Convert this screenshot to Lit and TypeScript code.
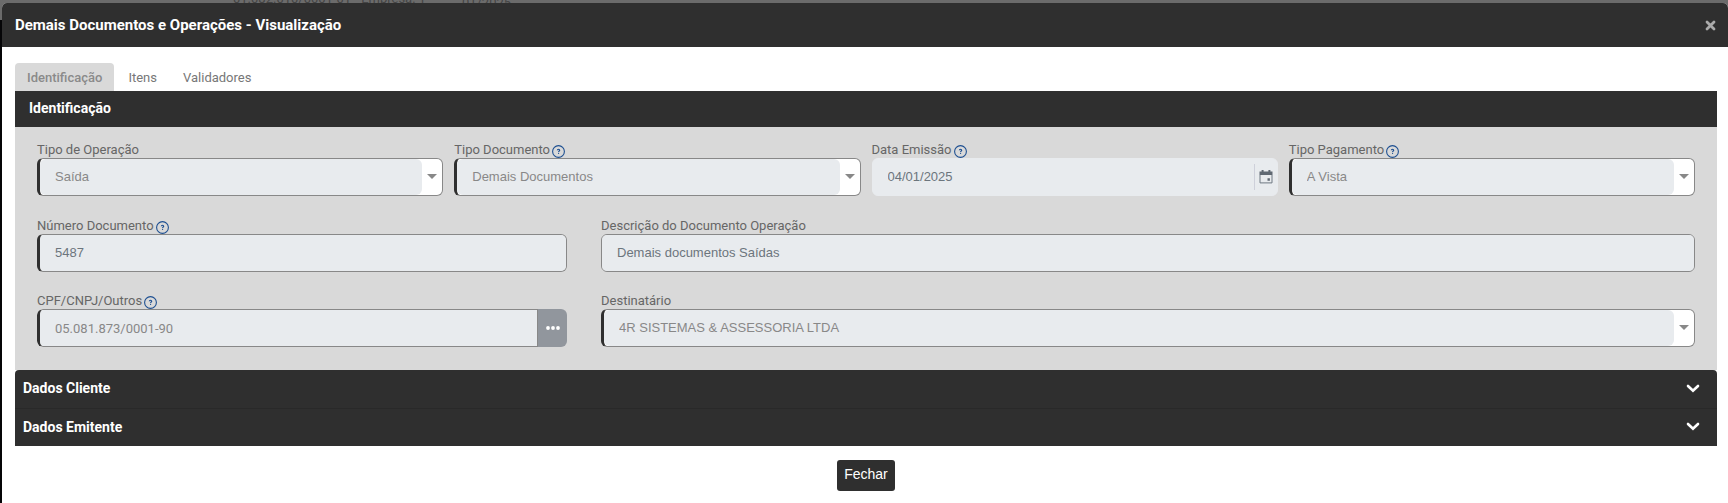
import { LitElement, html, css, svg, nothing } from "lit";
import { customElement, property, state } from "lit/decorators.js";

const helpIcon = html`<svg class="help" viewBox="0 0 13 13" aria-hidden="true">
  <circle cx="6.5" cy="6.5" r="5.9" fill="none" stroke="#1d4f91" stroke-width="1.1" />
  <path d="M5.3 5.2C5.3 4.5 5.8 4.2 6.5 4.2s1.2.4 1.2 1c0 .8-1.1.8-1.1 1.7" fill="none" stroke="#1d4f91" stroke-width="1.1" />
  <rect x="6" y="7.8" width="1.1" height="1.1" fill="#1d4f91" />
</svg>`;

@customElement("form-field")
class FormField extends LitElement {
  @property() label = "";
  @property() value = "";
  @property() kind: "text" | "select" | "date" | "lookup" = "text";
  @property({ type: Boolean }) help = false;
  @property({ type: Boolean }) required = false;

  static styles = css`
    :host {
      display: block;
      min-width: 0;
      font-family: Roboto, sans-serif;
      font-size: 13px;
    }
    .label {
      display: flex;
      align-items: flex-start;
      gap: 2px;
      height: 18px;
      line-height: 20px;
      color: #666;
      white-space: nowrap;
    }
    .label .help {
      width: 13px;
      height: 13px;
      padding-top: 5px;
    }
    .box {
      display: flex;
      box-sizing: border-box;
      height: 38px;
      border: 1px solid #888;
      border-radius: 6px;
      background: #e8ebee;
      overflow: hidden;
    }
    .required {
      border-left: 3px solid #2f2f2f;
    }
    .select {
      background: #fff;
    }
    .date {
      border-color: #e8ebee;
    }
    .control {
      flex: 1;
      min-width: 0;
      margin: 0;
      padding: 0 15px 2px;
      border: 0;
      outline: 0;
      appearance: none;
      background: #e8ebee;
      color: #6c757d;
      font: 13px "Liberation Sans", Arial, sans-serif;
      opacity: 1;
    }
    select.control {
      border-radius: 6px;
      color: #888;
    }
    .lookup .control {
      padding-bottom: 0;
      font-family: Roboto, sans-serif;
      color: #888;
    }
    .arrow {
      width: 10px;
      height: 5px;
      margin: 15px 5px;
    }
    .side {
      display: grid;
      place-items: center;
      padding: 0;
      border: 0;
      background: none;
    }
    .calendar {
      width: 23px;
      height: 26px;
      margin: auto 0;
      border-left: 1px solid #ced0da;
    }
    .more {
      width: 30px;
      background: #91969d;
    }
    .lookup {
      border-right: 0;
      border-top-right-radius: 0;
      border-bottom-right-radius: 0;
      flex: 1;
    }
    .group {
      display: flex;
      border-radius: 6px;
      overflow: hidden;
    }
    .group .more {
      border-left: 1px solid #888;
    }
  `;

  private control() {
    const input = html`<input id="c" class="control" type="text" readonly .value=${this.value} />`;
    const req = this.required ? "required" : "";
    switch (this.kind) {
      case "select":
        return html`<div class="box select ${req}">
          <select id="c" class="control" disabled>
            <option>${this.value}</option>
          </select>
          <svg class="arrow" viewBox="0 0 10 5" aria-hidden="true"><path d="M0 0h10L5 5z" fill="#888" /></svg>
        </div>`;
      case "date":
        return html`<div class="box date">
          ${input}
          <button class="side calendar" type="button" aria-label="Calendário">
            <svg width="14" height="14" viewBox="0 0 14 14" aria-hidden="true">
              <path d="M.5 1.5h13v3.5H.5z" fill="#5f6872" />
              <path d="M2.6 0h2v2.5h-2zM9.4 0h2v2.5h-2z" fill="#5f6872" />
              <path d="M1 5v7.9h12V5" fill="none" stroke="#6f7882" />
              <path d="M8.5 8.3h2.4v2.4H8.5z" fill="#5f6872" />
            </svg>
          </button>
        </div>`;
      case "lookup":
        return html`<div class="group">
          <div class="box lookup ${req}">${input}</div>
          <button class="side more" type="button" aria-label="Pesquisar">
            <svg width="14" height="4" viewBox="0 0 14 4" aria-hidden="true">
              ${[2, 7, 12].map((x) => svg`<circle cx=${x} cy="2" r="1.9" fill="#fff" />`)}
            </svg>
          </button>
        </div>`;
      default:
        return html`<div class="box ${req}">${input}</div>`;
    }
  }

  render() {
    return html`<label class="label" for="c">${this.label}${this.help ? helpIcon : nothing}</label>${this.control()}`;
  }
}

@customElement("app-root")
class AppRoot extends LitElement {
  @state() private tab = "Identificação";

  static styles = css`
    :host {
      display: flex;
      flex-direction: column;
      box-sizing: border-box;
      min-height: 100vh;
      background: linear-gradient(#6b6b6b 20px, #050507 20px);
      font-family: Roboto, sans-serif;
    }
    .behind {
      display: flex;
      align-items: flex-end;
      gap: 36px;
      height: 3px;
      padding-left: 233px;
      overflow: hidden;
      background: #6b6b6b;
      color: #444;
      font-size: 13px;
      line-height: 16px;
      white-space: nowrap;
    }
    .behind span {
      margin-bottom: -4px;
    }
    .behind .period {
      margin-bottom: -8px;
    }
    .modal {
      flex: 1;
      margin-left: 2px;
      border-radius: 5px 5px 0 0;
      background: #fff;
      overflow: hidden;
    }
    .head {
      display: flex;
      align-items: center;
      justify-content: space-between;
      height: 44px;
      padding: 0 12px 0 13px;
      background: #2f2f2f;
      color: #fff;
    }
    h1 {
      margin: 0;
      font-size: 15px;
      font-weight: 700;
    }
    .close {
      display: grid;
      padding: 0;
      border: 0;
      background: none;
    }
    .body {
      padding: 16px 11px 12px 13px;
    }
    .tabs {
      display: flex;
      gap: 2px;
    }
    .tab {
      height: 28px;
      padding: 0 12px;
      border: 0;
      border-radius: 4px 4px 0 0;
      background: none;
      color: #777;
      font: 13px Roboto, sans-serif;
    }
    .tab.active {
      background: #d9d9d9;
      color: #8a8a8a;
      font-weight: 500;
    }
    h2,
    .toggle {
      margin: 0;
      font-size: 14px;
      font-weight: 700;
      color: #fff;
      background: #2f2f2f;
    }
    h2 {
      padding: 0 14px 2px;
      line-height: 34px;
    }
    .panel {
      padding: 13px 22px 23px;
      background: #d9d9d9;
    }
    .quarters {
      display: grid;
      grid-template-columns: repeat(4, minmax(0, 1fr));
      gap: 11px;
      margin-bottom: 20px;
    }
    .thirds {
      display: grid;
      grid-template-columns: minmax(0, 1fr) minmax(0, 2fr);
      row-gap: 19px;
      margin: 0 -17px;
    }
    .thirds form-field {
      padding: 0 17px;
    }
    .accordion {
      border-radius: 4px 4px 0 0;
      overflow: hidden;
    }
    .toggle {
      display: flex;
      align-items: center;
      justify-content: space-between;
      width: 100%;
      height: 38px;
      padding: 0 17px 2px 8px;
      border: 0;
      font-family: Roboto, sans-serif;
    }
    .toggle + .toggle {
      border-top: 1px solid #292929;
    }
    .foot {
      display: flex;
      justify-content: center;
      padding-top: 14px;
    }
    .btn {
      height: 31px;
      padding: 0 7px 3px;
      border: 0;
      border-radius: 3px;
      background: #2f2f2f;
      color: #fff;
      font: 14px "Liberation Sans", Arial, sans-serif;
    }
  `;

  render() {
    return html`
      <div class="behind" aria-hidden="true">
        <span>01.082.010/0001-01 - Empresa: 1</span><span class="period">01/2025</span>
      </div>
      <div class="modal" role="dialog" aria-labelledby="title">
        <header class="head">
          <h1 id="title">Demais Documentos e Operações - Visualização</h1>
          <button class="close" type="button" aria-label="Fechar janela">
            <svg width="11" height="11" viewBox="0 0 11 11" aria-hidden="true">
              <path d="M2 2l7 7M9 2l-7 7" stroke="#aaa" stroke-width="2.8" stroke-linecap="round" />
            </svg>
          </button>
        </header>
        <div class="body">
          <div class="tabs" role="tablist">
            ${["Identificação", "Itens", "Validadores"].map(
              (t) => html`<button
                class="tab ${t === this.tab ? "active" : ""}"
                role="tab"
                aria-selected=${t === this.tab}
                @click=${() => (this.tab = t)}
              >${t}</button>`
            )}
          </div>
          <h2>Identificação</h2>
          <div class="panel">
            <div class="quarters">
              <form-field kind="select" required label="Tipo de Operação" value="Saída"></form-field>
              <form-field kind="select" required help label="Tipo Documento" value="Demais Documentos"></form-field>
              <form-field kind="date" help label="Data Emissão" value="04/01/2025"></form-field>
              <form-field kind="select" required help label="Tipo Pagamento" value="A Vista"></form-field>
            </div>
            <div class="thirds">
              <form-field required help label="Número Documento" value="5487"></form-field>
              <form-field label="Descrição do Documento Operação" value="Demais documentos Saídas"></form-field>
              <form-field kind="lookup" required help label="CPF/CNPJ/Outros" value="05.081.873/0001-90"></form-field>
              <form-field kind="select" required label="Destinatário" value="4R SISTEMAS &amp; ASSESSORIA LTDA"></form-field>
            </div>
          </div>
          <div class="accordion">
            ${["Dados Cliente", "Dados Emitente"].map(
              (t) => html`<button class="toggle" type="button" aria-expanded="false">
                <span>${t}</span>
                <svg width="14" height="9" viewBox="0 0 14 9" aria-hidden="true">
                  <path d="M2 2l5 4.8L12 2" fill="none" stroke="#fff" stroke-width="2.6" stroke-linecap="round" />
                </svg>
              </button>`
            )}
          </div>
          <div class="foot"><button class="btn" type="button">Fechar</button></div>
        </div>
      </div>
    `;
  }
}
